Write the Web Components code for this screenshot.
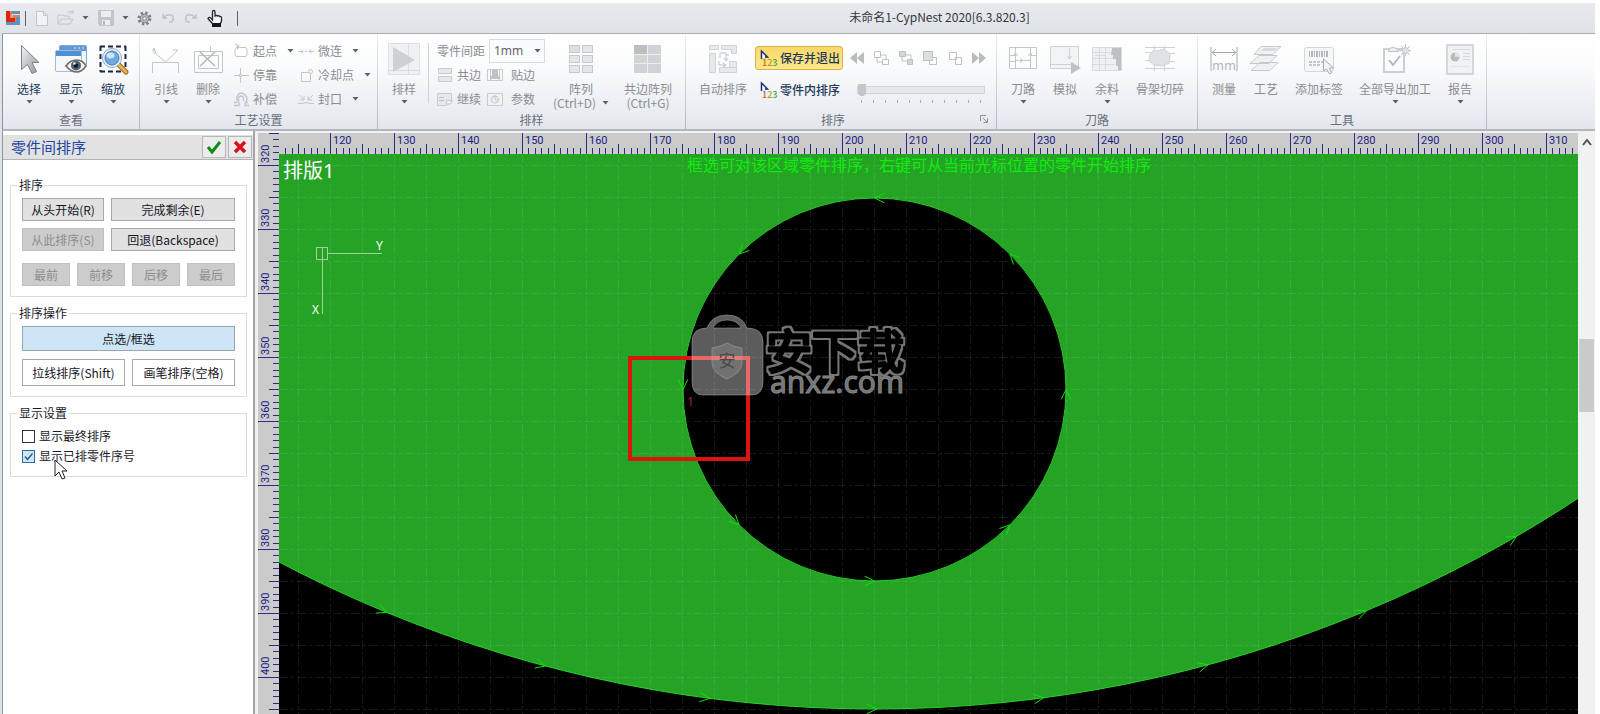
<!DOCTYPE html>
<html lang="zh-CN">
<head>
<meta charset="utf-8">
<title>未命名1-CypNest 2020[6.3.820.3]</title>
<style>
html,body{margin:0;height:100%;background:#fff;overflow:hidden}
body{font:12px/14px "Noto Sans CJK SC","Noto Sans",sans-serif;color:#1a1a2a}
</style>
</head>
<body>
<nest-app></nest-app>
<script>
const svg=(w,h,body,extra='')=>`<svg width="${w}" height="${h}" viewBox="0 0 ${w} ${h}" fill="none" ${extra}>${body}</svg>`;
const G='#c4c6c9',L='#e6e8ea';
const ICONS={
 logo:svg(14,14,`<path fill="#d9825a" d="M0 0h14v14H0z"/><path fill="#5b93c4" d="M6 0h8v3H6zM10 6h4v8H0v-3h10z"/><path fill="#e02414" d="M0 0h4v7h5v4H0z"/><path stroke="#e9d9cf" d="M14 3.500H6v3"/>`),
 doc:svg(12,16,`<path d="M.5 1.500h7l4 4v10H.5zM7.500 1.500v4h4" stroke="${G}" fill="#f2f3f5"/>`),
 open:svg(17,16,`<path d="M1 14V5h5l1 1h5v3M1 14l3-5h12l-3 5z" stroke="${G}"/><path d="M10 3q3-3 6-1m0-2v3h-3" stroke="${G}"/>`),
 save:svg(16,16,`<path fill="#c2c4c7" d="M0 0h16v16H2l-2-2z"/><path fill="#eceef0" d="M3 1h10v6H3zM4 10h8v5H4z"/><path fill="#b2b4b8" d="M5 11h2v4H5z"/>`),
 gear:svg(15,15,`<circle cx="7.500" cy="7.500" r="5.500" stroke="#7d7f83" stroke-width="3" stroke-dasharray="2.300 2.020"/><circle cx="7.500" cy="7.500" r="4.300" fill="#b9bbbe" stroke="#808286"/><circle cx="7.500" cy="7.500" r="1.800" fill="#f0f0f2" stroke="#808286"/>`),
 undo:svg(14,12,`<path d="M2 2v4h4M2 6q4-4 8-3t1 7H8" stroke="#bfc1c5" stroke-width="1.500"/>`),
 redo:svg(14,12,`<path d="M12 2v4H8M12 6q-4-4-8-3t-1 7h3" stroke="#bfc1c5" stroke-width="1.500"/>`),
 hand:svg(16,17,`<path d="M5.500 10V2q0-1.500 1.200-1.500T8 2v4q1.500-1 2.500 0 1.500-.6 2.200.5 1.500-.2 1.800 1V11q-.5 2-1.500 3H6q-3-3-5-5.500 1-2 3-.3z" fill="#f8f8f8" stroke="#20222e" stroke-width="1.300"/><path d="M5 13h9v4H5z" fill="#16181f"/>`),
 select:svg(32,32,`<defs><linearGradient id="a" x2="1" y2="1"><stop stop-color="#f3f5f7"/><stop offset="1" stop-color="#8d949c"/></linearGradient></defs><path d="M8.500 2.500v24l6-5 4.500 9 4.500-2-4.500-9h7z" fill="url(#a)" stroke="#7c828a" stroke-linejoin="round"/>`),
 show:svg(32,32,`<rect x="4.500" y="2.500" width="27" height="20" rx="1.500" fill="#eef5fb" stroke="#7fa6cc"/><path fill="#5d9ad6" d="M5 3h26v5H5z"/><rect x=".5" y="7.500" width="26" height="21" rx="1.500" fill="#f4f8fc" stroke="#9fbcd8"/><path fill="#4e90d2" d="M1 8h25v5H1z"/><path d="M19 5h2m2 0h2m2 0h2" stroke="#dbe9f6"/><path d="M11 23q4-6 10.500-6T31 23q-4 6-9.500 6T11 23z" fill="#f4f0ea" stroke="#776b66" stroke-width="1.600"/><circle cx="21" cy="22.500" r="5" fill="#4d6275"/><circle cx="21" cy="22.500" r="2.200" fill="#0f1620"/><circle cx="19.500" cy="20.500" r="1.300" fill="#dfe9f0"/>`),
 zoom:svg(32,32,`<path d="M3 3.500h26M3 28.500h26" stroke="#1d2740" stroke-width="2" stroke-dasharray="5 3"/><path d="M3.500 3v26M28.500 3v26" stroke="#1d2740" stroke-width="2" stroke-dasharray="5 3"/><path d="M22 22l7 7" stroke="#8f6a2c" stroke-width="5" stroke-linecap="round"/><path d="M22 22l7 7" stroke="#f0b24e" stroke-width="3" stroke-linecap="round"/><circle cx="15" cy="15" r="9.500" fill="#e8f1fa" stroke="#93a9bf"/><circle cx="15" cy="15" r="7" fill="#6fa9e0" stroke="#4a7fb8"/><ellipse cx="13.500" cy="12.500" rx="4" ry="3" fill="#cfe3f6"/>`),
 lead:svg(32,32,`<path d="M2.500 30V19.500h26V30M15.500 19L6 11 4 5M15.500 19L23 12l5-5M4 11V5m0 0l-2 3M28 7l-5 0" stroke="${G}"/>`),
 del:svg(32,32,`<path d="M2.500 8.500h28v21h-28zM6.500 12.500h20v13h-20zM18.500 3v6" stroke="${G}"/><path d="M8 9l15 14M23 9L8 23" stroke="#b4b6ba" stroke-width="1.500"/>`),
 start:svg(16,16,`<path d="M3 4.500h9q2 0 2 2v5q0 2-2 2H4q-2 0-2-2v-5l3-4m-3-1l4 1-2 4" stroke="${G}"/>`),
 stop:svg(16,16,`<path d="M1 8.500h15M7.500 1v15" stroke="${G}"/><path fill="#f4f5f6" stroke="${G}" d="M6.500 7.500h2v2h-2z"/>`),
 comp:svg(16,16,`<path d="M1 14.500h5V12q-4-4-1-8t7 0 0 8v2.500h4M1 11.500h3m8 0h3M6 10q-2-4 2-5 4 1 2 5" stroke="${G}" stroke-width="1.300"/>`),
 micro:svg(16,16,`<path d="M0 8.500h5m-2-2l2 2-2 2M16 8.500h-5m2-2l-2 2 2 2M7 8.500h2" stroke="${G}"/>`),
 cool:svg(16,16,`<path d="M3.500 5.500h9v9h-9z" stroke="${G}"/><circle cx="12.500" cy="4.500" r="2" stroke="${G}" fill="#f5f6f7"/>`),
 seal:svg(16,16,`<path d="M0 12.500h4l4-1 4 1h4M1 4l5 5m0-4v4H2M15 4l-5 5m0-4v4h4" stroke="${G}"/>`),
 nest:svg(32,32,`<path fill="#f0f1f2" stroke="#dcdee0" d="M.5.500h31v31H.500z"/><path stroke="#dcdee0" d="M20.500 0v32M0 27.500h32"/><path fill="#ced0d2" d="M5 4l22 13L5 29z"/>`),
 shared:svg(16,16,`<path fill="${L}" stroke="#c8cacd" d="M1.500 1.500h13v5h-13zM1.500 9.500h13v5h-13z"/>`),
 stick:svg(16,16,`<path stroke="#c8cacd" d="M.5 2.500h15v11H.500zM3.500 3v10m9-10v10"/><path fill="#bfc1c4" d="M5 3h6v6h2v3H3V9h2z"/>`),
 cont:svg(16,16,`<path fill="${L}" stroke="#c8cacd" d="M.5 2.500h14v7h-5v5h-9z"/><path stroke="#bfc1c4" d="M2 6.500h5m-5 3h5M10 13q5 1 5-4"/>`),
 param:svg(16,16,`<path fill="#f0f1f2" stroke="#c8cacd" d="M.5 2.500h15v12H.500z"/><circle cx="8" cy="8.500" r="3.500" stroke="${G}"/><path d="M8 4v5h3" stroke="${G}"/>`),
 array:svg(32,32,[0,1,2].map(r=>[0,1].map(c=>`<rect x="${4.5+c*13}" y="${2.5+r*10}" width="10" height="7" fill="${c||r?'#e4e6e8':'#dcdee0'}" stroke="#c6c8cb"/>`).join('')).join('')),
 carray:svg(32,32,`<path fill="#d0d2d5" d="M2 2h27v28H2z"/><path fill="#bcbec1" d="M2 2h14v9H2z"/><path stroke="#eceef0" d="M15.500 2v28M2 11.500h27M2 20.500h27"/>`),
 auto:svg(32,32,`<path fill="${L}" stroke="#d0d2d5" d="M2.500 2.500h9v4h-9zM14.500 2.500h15v8h-5v-4h-10zM2.500 10.500h6v19h-6zM12.500 24.500h17v5h-17zM22.500 18.500h7v6h-7z"/><path stroke="#bfc1c4" d="M13 15V10h6v7m-2-2l2 3 2-3M22 12h-3M12 18v4h6m-2-2l3 2-3 2"/>`),
 sort:svg(17,16,`<path fill="#fff" stroke="#1d2b7c" stroke-width="1.500" d="M1.500 9V1l6 6H5"/>`),
 first:svg(16,16,`<path fill="#b9bbbe" d="M8 2v12L1 8zM15 2v12L8 8z"/>`),
 last:svg(16,16,`<path fill="#b9bbbe" d="M8 2v12l7-6zM1 2v12l7-6z"/>`),
 n1:svg(16,16,`<path stroke="#bfc1c4" d="M1.500 1.500h6v6h-6zM9.500 9.500h6v5h-6zM4 8v4h5M8 5h5v4"/>`),
 n2:svg(16,16,`<path stroke="#bfc1c4" fill="#d4d6d8" d="M1.500 1.500h6v5h-6zM9.500 9.500h5v5h-5z"/><path stroke="#bfc1c4" d="M4 7v4h5M8 5h5v4"/>`),
 n3:svg(16,16,`<path stroke="#bfc1c4" d="M7.500 7.500h7v7h-7z"/><path fill="#dcdee0" stroke="#bfc1c4" d="M1.500 1.500h9v9h-9z"/>`),
 n4:svg(16,16,`<path stroke="#bfc1c4" d="M8.500 7.500h6v7h-6zM2.500 2.500h7v7h-7z"/>`),
 path:svg(32,32,`<path stroke="${G}" d="M2.500 4.500h27v21h-27zM8.500 5v21M23.500 5v21M8 17.500h16M6.500 13l2-3 2 3M21.500 13l2-3 2 3M13 15.500l3 2-3 2M3 12.500h5M3 18.500h5M24 12.500h5"/>`),
 sim:svg(32,32,`<path fill="#f2f3f5" stroke="#cfd1d4" d="M1.500 3.500h28v22h-28z"/><path stroke="#cfd1d4" d="M2 21.500h20M20.500 5v11m-2-3l2 3 2-3"/><path fill="#bfc1c4" d="M22 19l10 6-10 6z"/>`),
 remain:svg(32,32,`<path fill="#eff0f1" stroke="#d8dadc" d="M1.500 4.500h29v23h-29z"/><path stroke="#d8dadc" d="M2 9.500h18M2 15.500h20M2 21.500h22M8.500 5v22M14.500 5v22M4 12.500h10"/><path fill="#bfc1c4" d="M21 5h9v22h-3v-4h-2v-7h-3v-4h-2z"/>`),
 frame:svg(32,32,`<path stroke="#cfd1d4" d="M1 9.500h7M1 17.500h5M1 25.500h30M26 10.500h5M25 18.500h6M10.500 3v5M20.500 3v5M1 4.500h30M10.500 22v6M20.500 22v6"/><path fill="#e0e2e4" stroke="#cfd1d4" d="M6 12l4-5 4 1 6-2 6 5-1 9-7 3-8-1-5-4z"/>`),
 measure:svg(32,32,`<path stroke="#a8aaae" d="M3 4v24M29 4v24M4 9.500h24M8 6L4 9.500 8 13M24 6l4 3.500-4 3.500"/>`),
 layers:svg(32,32,`<path fill="#f0f1f3" stroke="#c6c8cb" d="M1 27.500l9-8h18l-8 8zM0 20.500l9-8h18l-8 8zM4 11.500l7-8h20l-8 8z"/><path fill="#d9dbde" d="M11 8l3-3h14l-3 3z"/>`),
 label:svg(32,32,`<rect x="1.500" y="4.500" width="29" height="24" rx="2" fill="#f6f7f8" stroke="#d4d6d9"/><path stroke="#b4b6ba" stroke-width="6" stroke-dasharray="1 1 2 1" d="M6 11h20"/><path stroke="#b4b6ba" stroke-width="1.500" stroke-dasharray="3 1" d="M6 19h14M6 22h12"/><path fill="#f3f4f5" stroke="#a9abaf" d="M20.500 16v12l3-2 3 5 2-1-2-5h4z"/>`),
 exp:svg(32,32,`<path stroke="#cdcfd2" stroke-width="2" d="M5 6h20v23H5z"/><path fill="#eceef0" stroke="#bfc1c4" d="M9.500 8.500q0-4 5-4 4 0 5 4z"/><path stroke="#b4b6ba" stroke-width="2" d="M10 17l4 5 7-9"/><path stroke="#c3c5c8" d="M26.500 1v12M20 7.500h12M22 3l9 9M31 3l-9 9"/><circle cx="26.500" cy="7.500" r="3" fill="#e0e2e4" stroke="#c3c5c8"/>`),
 report:svg(32,32,`<path fill="#f1f2f4" stroke="#c9cbce" stroke-width="1.500" d="M3 2h26v29H3z"/><circle cx="11" cy="14" r="4.500" fill="#b9bbbf"/><path fill="#e2e4e6" d="M11 14V9q5 0 5 5z"/><path stroke="#d5d7da" d="M8 6.500h18M19 10.500h7M19 13.500h7M19 16.500h7"/><path stroke="#e2e4e6" d="M6 23.500h20"/>`),
 launch:svg(9,9,`<path stroke="#8a8d93" d="M.5 6V.5H6M3 3l4 4M7.500 3.500v4h-4"/>`),
 ok:svg(16,14,`<path d="M2 7l4 5 8-10" stroke="#138a13" stroke-width="3"/>`),
 no:svg(16,14,`<path d="M3 2l10 10M13 2L3 12" stroke="#d80f14" stroke-width="3.500"/>`),
 arrow:svg(7,4,`<path d="M.5 0h6l-3 3.500z" fill="#5b5f68"/>`),
 up:svg(12,10,`<path d="M2 8l4-5 4 5" stroke="#505050" stroke-width="2"/>`),
 cursor:svg(14,21,`<path d="M1 1v16l4-4 3 7 3-1-3-7h5z" fill="#fff" stroke="#222"/>`)
};
const define=(name,html,after)=>{
 const t=document.createElement('template');
 t.innerHTML=html;
 customElements.define(name,class extends HTMLElement{
  connectedCallback(){
   if(this.shadowRoot)return;
   const r=this.attachShadow({mode:'open'});
   r.append(t.content.cloneNode(true));
   if(after)after.call(this,r);
  }
 });
};
const BTN='button{all:unset;box-sizing:border-box;cursor:default}';

const ICON_TEXT={
 sort:'<text x="2" y="16" font-size="9" fill="#c06a20">1<tspan fill="#b09a30">2</tspan><tspan fill="#30a040">3</tspan></text>',
 measure:'<text x="16" y="27" font-size="13" fill="#b4b6ba" text-anchor="middle">mm</text>'
};
customElements.define('nest-icon',class extends HTMLElement{
 static observedAttributes=['name'];
 constructor(){super();this.attachShadow({mode:'open'})}
 attributeChangedCallback(a,o,n){
  this.shadowRoot.innerHTML='<style>:host{display:inline-flex;flex:none;justify-content:center;align-items:center}svg{display:block;overflow:visible}text{font-family:"Noto Sans CJK SC",sans-serif}</style>'+ICONS[n].replace('</svg>',(ICON_TEXT[n]||'')+'</svg>');
 }
});

define('ribbon-button',`<style>
:host{display:block;flex:none;width:42px;color:#1e395b}
:host([off]){color:#8b8d91}
:host([w64]){width:64px}:host([w70]){width:70px}:host([w88]){width:88px}
${BTN}
button{width:100%;display:flex;flex-direction:column;align-items:center;text-align:center;white-space:nowrap}
.t{margin-top:7px}
.row{display:flex;align-items:center;gap:6px}
.a{margin-top:4px}
</style><button type="button"><nest-icon></nest-icon><span class="t"></span></button>`,function(r){
 r.querySelector('nest-icon').setAttribute('name',this.getAttribute('icon'));
 r.querySelector('.t').textContent=this.getAttribute('label');
 const key=this.getAttribute('key'),b=r.querySelector('button'),ar='<nest-icon class="a" name="arrow"></nest-icon>';
 if(key)b.insertAdjacentHTML('beforeend',`<span class="row">${key}${this.hasAttribute('menu')?'<nest-icon name="arrow"></nest-icon>':''}</span>`);
 else if(this.hasAttribute('menu'))b.insertAdjacentHTML('beforeend',ar);
});

define('ribbon-item',`<style>
:host{display:block;height:24px;color:#8b8d91}
:host([on]),:host([hot]){color:#1e395b;font-weight:500}
${BTN}
button{display:flex;align-items:center;gap:4px;height:24px;white-space:nowrap}
:host([wide]) button{gap:8px}
:host([on]) button,:host([hot]) button{padding:0 4px;width:88px;gap:3px;border:1px solid transparent}
:host([hot]) button{border-color:#d8ae50;border-radius:3px;background:linear-gradient(#fbd868,#fde27c 60%,#ffe88c)}
.a{margin-left:6px}
</style><button type="button"><nest-icon></nest-icon><slot></slot></button>`,function(r){
 r.querySelector('nest-icon').setAttribute('name',this.getAttribute('icon'));
 if(this.hasAttribute('menu'))r.querySelector('button').insertAdjacentHTML('beforeend','<nest-icon class="a" name="arrow"></nest-icon>');
});

define('ribbon-group',`<style>
:host{display:flex;flex-direction:column;flex:none;box-sizing:border-box;border-right:1px solid;border-image:linear-gradient(#eceef1,#b4b8be) 1;position:relative}
.body{display:flex;height:78px;padding:0 5px;box-sizing:border-box}
.cap{display:flex;justify-content:center;color:#6a6f7a;line-height:16px}
:host([launcher]) .cap{padding-right:16px}
.l{position:absolute;right:7px;bottom:5px}
</style><div class="body"><slot></slot></div><div class="cap"></div>`,function(r){
 r.querySelector('.cap').textContent=this.getAttribute('label');
 if(this.hasAttribute('launcher'))r.querySelector('.cap').insertAdjacentHTML('beforeend','<nest-icon class="l" name="launch"></nest-icon>');
});

define('ribbon-bar',`<style>
:host{display:flex;height:95px;border-top:1px solid #a9acb2;border-bottom:2px solid #b2b5bb;border-left:1px solid #8f939b;background:linear-gradient(#fff,#fafbfc 35%,#e3e7ed);overflow:hidden}
ribbon-button{padding-top:9px}
.g2{display:grid;grid-template-columns:65px 74px;grid-auto-rows:24px;padding:5px 0 0 4px}
.line{width:1px;height:60px;margin:9px 8px 0 3px;background:#cfd2d6}
.g3{display:flex;flex-direction:column;padding-top:5px;width:109px}
.r{display:flex;height:24px;align-items:center;color:#8b8d91}
.r ribbon-item{width:50px}
.r label{width:52px;white-space:nowrap}
select{appearance:none;box-sizing:border-box;width:56px;height:24px;border:1px solid #d9dbde;border-radius:0;padding:0 4px;margin:0;font:12px/20px "Noto Sans",sans-serif;color:#666;background:#fafbfc}
.combo{display:grid;align-items:center}
.combo>*{grid-area:1/1}
.combo nest-icon{justify-self:end;margin-right:4px;pointer-events:none}
.col{display:flex;flex-direction:column;gap:8px;padding-top:12px;width:88px}
.nav{display:flex;flex-direction:column;width:138px;padding:16px 4px 0 6px}
.nav .b{display:flex;justify-content:space-between}
${BTN}
input{appearance:none;display:block;margin:15px 2px 0 8px;height:14px;width:128px;background:none}
input::-webkit-slider-runnable-track{height:8px;background:#e6e8ea;border:1px solid #d2d4d7;box-sizing:border-box}
input::-webkit-slider-thumb{appearance:none;width:8px;height:12px;margin-top:-3px;background:#c3c5c8;border-radius:0 0 4px 4px}
.ticks{display:flex;justify-content:space-between;margin:3px 6px 0 12px}
.ticks i{width:1px;height:3px;background:#a9acb0}
</style>
<ribbon-group label="查看">
 <ribbon-button icon="select" label="选择" menu></ribbon-button><ribbon-button icon="show" label="显示" menu></ribbon-button><ribbon-button icon="zoom" label="缩放" menu></ribbon-button>
</ribbon-group>
<ribbon-group label="工艺设置">
 <ribbon-button off icon="lead" label="引线" menu></ribbon-button><ribbon-button off icon="del" label="删除" menu></ribbon-button>
 <div class="g2">
  <ribbon-item icon="start" menu>起点</ribbon-item><ribbon-item icon="micro" menu>微连</ribbon-item>
  <ribbon-item icon="stop">停靠</ribbon-item><ribbon-item icon="cool" menu>冷却点</ribbon-item>
  <ribbon-item icon="comp">补偿</ribbon-item><ribbon-item icon="seal" menu>封口</ribbon-item>
 </div>
</ribbon-group>
<ribbon-group label="排样">
 <ribbon-button off icon="nest" label="排样" menu></ribbon-button><div class="line"></div>
 <div class="g3">
  <div class="r"><label for="gap">零件间距</label><span class="combo"><select id="gap"><option>1mm</option></select><nest-icon name="arrow"></nest-icon></span></div>
  <div class="r"><ribbon-item icon="shared">共边</ribbon-item><ribbon-item wide icon="stick">贴边</ribbon-item></div>
  <div class="r"><ribbon-item icon="cont">继续</ribbon-item><ribbon-item wide icon="param">参数</ribbon-item></div>
 </div>
 <ribbon-button off w70 icon="array" label="阵列" key="(Ctrl+D)" menu></ribbon-button><ribbon-button off w64 icon="carray" label="共边阵列" key="(Ctrl+G)"></ribbon-button>
</ribbon-group>
<ribbon-group label="排序" launcher>
 <ribbon-button off w64 icon="auto" label="自动排序"></ribbon-button>
 <div class="col"><ribbon-item hot icon="sort">保存并退出</ribbon-item><ribbon-item on icon="sort">零件内排序</ribbon-item></div>
 <div class="nav"><div class="b"></div><input type="range" value="0" aria-label="速度"><div class="ticks"></div></div>
</ribbon-group>
<ribbon-group label="刀路">
 <ribbon-button off icon="path" label="刀路" menu></ribbon-button><ribbon-button off icon="sim" label="模拟"></ribbon-button><ribbon-button off icon="remain" label="余料" menu></ribbon-button><ribbon-button off w64 icon="frame" label="骨架切碎"></ribbon-button>
</ribbon-group>
<ribbon-group label="工具">
 <ribbon-button off icon="measure" label="测量"></ribbon-button><ribbon-button off icon="layers" label="工艺"></ribbon-button><ribbon-button off w64 icon="label" label="添加标签"></ribbon-button><ribbon-button off w88 icon="exp" label="全部导出加工" menu></ribbon-button><ribbon-button off icon="report" label="报告" menu></ribbon-button>
</ribbon-group>`,function(r){
 r.querySelector('.b').innerHTML=[['first','最前'],['n1','前移'],['n2','前一个'],['n3','后一个'],['n4','后移'],['last','最后']].map(([n,t])=>`<button type="button" aria-label="${t}"><nest-icon name="${n}"></nest-icon></button>`).join('');
 r.querySelector('.ticks').innerHTML='<i></i>'.repeat(11);
});

define('title-bar',`<style>
:host{display:flex;height:30px;align-items:center;background:linear-gradient(#e8eaed,#dfe3e8);color:#33363c}
.q{display:flex;flex:0 0 278px;align-items:center;padding-left:6px}
.s{width:1px;height:15px;background:#5a6070;margin:0 10px 0 5px}
.g{margin-right:9px}.m{margin-right:8px}
h1{flex:1;margin:0;font:inherit;line-height:24px;padding-bottom:3px;text-align:center}
${BTN} button{display:flex}
</style><div class="q"><nest-icon name="logo"></nest-icon><span class="s"></span>
<button type="button" class="g" aria-label="新建"><nest-icon name="doc"></nest-icon></button><button type="button" class="m" aria-label="打开"><nest-icon name="open"></nest-icon></button><nest-icon class="g" name="arrow"></nest-icon>
<button type="button" class="m" aria-label="保存"><nest-icon name="save"></nest-icon></button><nest-icon class="m" name="arrow"></nest-icon>
<button type="button" class="g" aria-label="设置"><nest-icon name="gear"></nest-icon></button><button type="button" class="g" aria-label="撤销"><nest-icon name="undo"></nest-icon></button><button type="button" class="g" aria-label="重做"><nest-icon name="redo"></nest-icon></button><button type="button" class="g" aria-label="手"><nest-icon name="hand"></nest-icon></button><span class="s"></span></div>
<h1>未命名1-CypNest 2020[6.3.820.3]</h1>`);

define('group-box',`<style>
:host{display:block}
fieldset{margin:0;min-width:0;border:1px solid #dcdcdc;padding:6px 11px 10px 11px;display:flow-root}
legend{padding:0 2px;margin-left:-5px;line-height:14px}
</style><fieldset><legend></legend><slot></slot></fieldset>`,function(r){r.querySelector('legend').textContent=this.getAttribute('label')});

define('panel-button',`<style>
:host{display:block;min-width:0}
button{box-sizing:border-box;width:100%;height:23px;padding:0;border:1px solid #a8a8ac;border-radius:0;background:#e1e1e1;font:inherit;color:#15151f;white-space:nowrap}
button:disabled{background:#ccc;border-color:#c0c0c0;color:#8c8c8c}
:host([flat]) button{background:#fff;height:27px}
:host([picked]) button{background:#cde5f4;border-color:#9aa7b0;height:25px}
</style><button type="button"><slot></slot></button>`,function(r){if(this.hasAttribute('off'))r.querySelector('button').disabled=true});

define('check-line',`<style>
:host{display:block}
label{display:flex;align-items:center;gap:4px;height:20px}
input{appearance:none;box-sizing:border-box;width:13px;height:13px;margin:0;border:1px solid #333;background:#fff}
input:checked{border-color:#2a6da8;background:#cfe6f8}
.b{display:grid}.b>*{grid-area:1/1}
svg{display:none;pointer-events:none}
input:checked+svg{display:block}
</style><label><span class="b"><input type="checkbox"><svg width="13" height="13" fill="none"><path d="M3 6.500L5.500 9.500 10.500 3.500" stroke="#1f4e80" stroke-width="1.200"/></svg></span><slot></slot></label>`,function(r){r.querySelector('input').checked=this.hasAttribute('checked')});

define('sort-panel',`<style>
:host{display:flex;flex-direction:column;box-sizing:border-box;position:relative;border-left:1px solid #8f939b;border-right:2px solid #a3a5aa;background:#fff}
header{display:flex;align-items:center;gap:2px;height:25px;margin-top:4px;padding:0 1px 0 8px;box-sizing:border-box;background:#e2e2e2;border-bottom:1px solid #b4b4b8}
h2{flex:1;margin:0;font:15px/20px "Noto Sans CJK SC",sans-serif;color:#1f47a6}
header button{display:grid;place-items:center;width:24px;height:22px;padding:0;border:1px solid #b8b8b8;background:#ececec}
main{display:grid;gap:9px;padding:18px 6px 0 7px}
.g{display:grid;gap:7px;grid-template-columns:82px 1fr}
.q{display:grid;gap:7px;grid-template-columns:repeat(4,1fr);margin-top:12px}
.h{display:grid;gap:8px 7px;grid-template-columns:1fr 1fr}
.h .a{grid-column:1/3}
.c{position:absolute;left:51px;top:328px}
</style>
<header><h2>零件间排序</h2><button type="button" aria-label="确定"><nest-icon name="ok"></nest-icon></button><button type="button" aria-label="取消"><nest-icon name="no"></nest-icon></button></header>
<main>
<group-box label="排序"><div class="g"><panel-button>从头开始(R)</panel-button><panel-button>完成剩余(E)</panel-button><panel-button off>从此排序(S)</panel-button><panel-button>回退(Backspace)</panel-button></div>
<div class="q"><panel-button off>最前</panel-button><panel-button off>前移</panel-button><panel-button off>后移</panel-button><panel-button off>最后</panel-button></div></group-box>
<group-box label="排序操作"><div class="h"><panel-button class="a" picked>点选/框选</panel-button><panel-button flat>拉线排序(Shift)</panel-button><panel-button flat>画笔排序(空格)</panel-button></div></group-box>
<group-box label="显示设置"><check-line>显示最终排序</check-line><check-line checked>显示已排零件序号</check-line></group-box>
</main><nest-icon class="c" name="cursor"></nest-icon>`);

/* World coordinates are millimetres drawn at 6.4 px each. */
const S=6.4;
define('nest-ruler',`<style>
:host{display:block;background:#cbcbcb;overflow:hidden;min-width:0;min-height:0;contain:size}
svg{display:block;width:100%;height:100%}
text{font:11px Roboto,sans-serif;fill:#1c1c84}
</style><svg shape-rendering="crispEdges"></svg>`,function(r){
 const v=this.hasAttribute('vertical'),o=+this.getAttribute('origin'),z=+this.getAttribute('zero');
 const draw=len=>{
  let d='',t='';
  for(let i=-Math.floor(z/S);z+i*S<len;i++){
   const p=Math.round(z+i*S),n=o+i,h=n%10?n%5?6:10:21;
   d+=v?`M21 ${p+.5}h-${h}`:`M${p+.5} 21v-${h}`;
   if(n%10)continue;
   if(v&&p>22)t+=`<text transform="translate(11 ${p-2}) rotate(-90)">${n}</text>`;
   if(!v&&p+24<len)t+=`<text x="${p+3}" y="11">${n}</text>`;
  }
  r.querySelector('svg').innerHTML=`<path stroke="#2c2c88" d="${d}"/>${t}`;
 };
 new ResizeObserver(()=>draw(v?this.clientHeight:this.clientWidth)).observe(this);
});

define('nest-canvas',`<style>
:host{display:block;background:#000;overflow:hidden;min-width:0;min-height:0;contain:size}
svg{display:block;width:100%;height:100%}
text{font-family:"Noto Sans","Noto Sans CJK SC",sans-serif}
</style><svg>
<defs><filter id="rim" x="-10%" y="-10%" width="120%" height="130%"><feMorphology in="SourceAlpha" operator="dilate" radius="1.500" result="big"/><feFlood flood-color="#757575"/><feComposite in2="big" operator="in"/><feComposite in2="SourceAlpha" operator="out"/></filter></defs>
<circle cx="595.500" cy="-725" r="1280" fill="#24a324" stroke="#27d027"/>
<circle cx="595.500" cy="235.500" r="191.500" fill="#000" stroke="#27c827"/>
<path id="grid" stroke="#fff" stroke-opacity=".09" stroke-dasharray="9 3 3 3"/>
<path id="arrows" fill="none" stroke="#12e012"/>
<text x="4" y="24" font-size="20" fill="#fff">排版1</text>
<text x="408" y="17" font-size="16" fill="#12ea12">框选可对该区域零件排序，右键可从当前光标位置的零件开始排序</text>
<g stroke="#a8cca8" fill="none" shape-rendering="crispEdges"><path d="M37.500 93.500h11v12h-11zM48 99.500h55M43.500 94v66"/></g>
<g font-size="12" fill="#fff"><text x="97" y="96">Y</text><text x="33" y="160">X</text></g>
<rect x="351" y="204" width="118" height="101" fill="none" stroke="#dc1410" stroke-width="4"/>
<text x="408" y="252" font-size="12" fill="#b42424">1</text>
<g fill="#fff" fill-opacity=".36" stroke="#aaa" stroke-opacity=".5">
<path fill-rule="evenodd" d="M428 174q5-13 20-13t20 13q16 0 16 14v39q0 14-11 14H424q-11 0-11-14v-39q0-14 15-14zM434 174h28q-4-8-14-8t-14 8z"/>
<path fill="#ccc" fill-opacity=".2" stroke="#aaa" d="M433 194q8-1 15-5 7 4 15 5v16q-1 9-15 15-14-6-15-15z"/></g>
<text x="448" y="213" font-size="17" fill="#484848" text-anchor="middle">安</text>
<text x="487" y="214" font-size="46" stroke="#000" stroke-width="3" stroke-linejoin="round" filter="url(#rim)">安下载</text>
<text x="491" y="239" font-size="30" fill="#747474" stroke="#858585">anxz.com</text>
</svg>`,function(r){
 let d='';
 for(let x=19.5;x<3000;x+=32)d+=`M${x} 0v3000`;
 for(let y=11.5;y<3000;y+=32)d+=`M0 ${y}h3000`;
 r.querySelector('#grid').setAttribute('d',d);
 const rad=Math.PI/180;let a='';
 const arrow=(cy,R,deg)=>{
  const t=deg*rad,x=595.5+R*Math.sin(t),y=cy+R*Math.cos(t),h=-t;
  const w=k=>`${x-11*Math.cos(h+k)} ${y-11*Math.sin(h+k)}`;
  a+=`M${w(.45)}L${x} ${y}L${w(-.45)}`;
 };
 for(let i=0;i<8;i++)arrow(235.5,191.5,i*45);
 for(let i=-8;i<9;i++)arrow(-725,1280,i*7.5+.1);
 r.querySelector('#arrows').setAttribute('d',a);
});

define('scroll-rail',`<style>
:host{display:flex;flex-direction:column;align-items:center;background:#f0f1f1}
nest-icon{margin:4px 0}
.a{flex:188}.t{width:15px;flex:73;background:#cacaca}.b{flex:303}
</style><nest-icon name="up"></nest-icon><div class="a"></div><div class="t"></div><div class="b"></div>`);

define('nest-app',`<style>
:host{display:flex;flex-direction:column;height:100vh;box-sizing:border-box;padding:3px 5px 0 0}
.f{flex:1;min-height:0;display:flex;flex-direction:column;background:#dfe3e8}
.w{flex:1;min-height:0;display:flex;flex-direction:column;padding-left:2px}
.m{flex:1;min-height:0;display:grid;grid-template-columns:256px 21px minmax(0,1fr) 17px;grid-template-rows:21px minmax(0,1fr);padding-top:2px;background:#f0f1f1}
sort-panel{grid-row:1/3;margin:-2px 3px 0 0}
.v{grid-area:1/2/3/3}
.h{grid-area:1/3}
.c{grid-area:2/3}
scroll-rail{grid-area:1/4/3/5}
</style><div class="f"><title-bar></title-bar><div class="w"><ribbon-bar></ribbon-bar>
<div class="m"><sort-panel></sort-panel><nest-ruler class="v" vertical origin="320" zero="32"></nest-ruler><nest-ruler class="h" origin="120" zero="51"></nest-ruler><nest-canvas class="c"></nest-canvas><scroll-rail></scroll-rail></div></div></div>`);
</script>
</body>
</html>
